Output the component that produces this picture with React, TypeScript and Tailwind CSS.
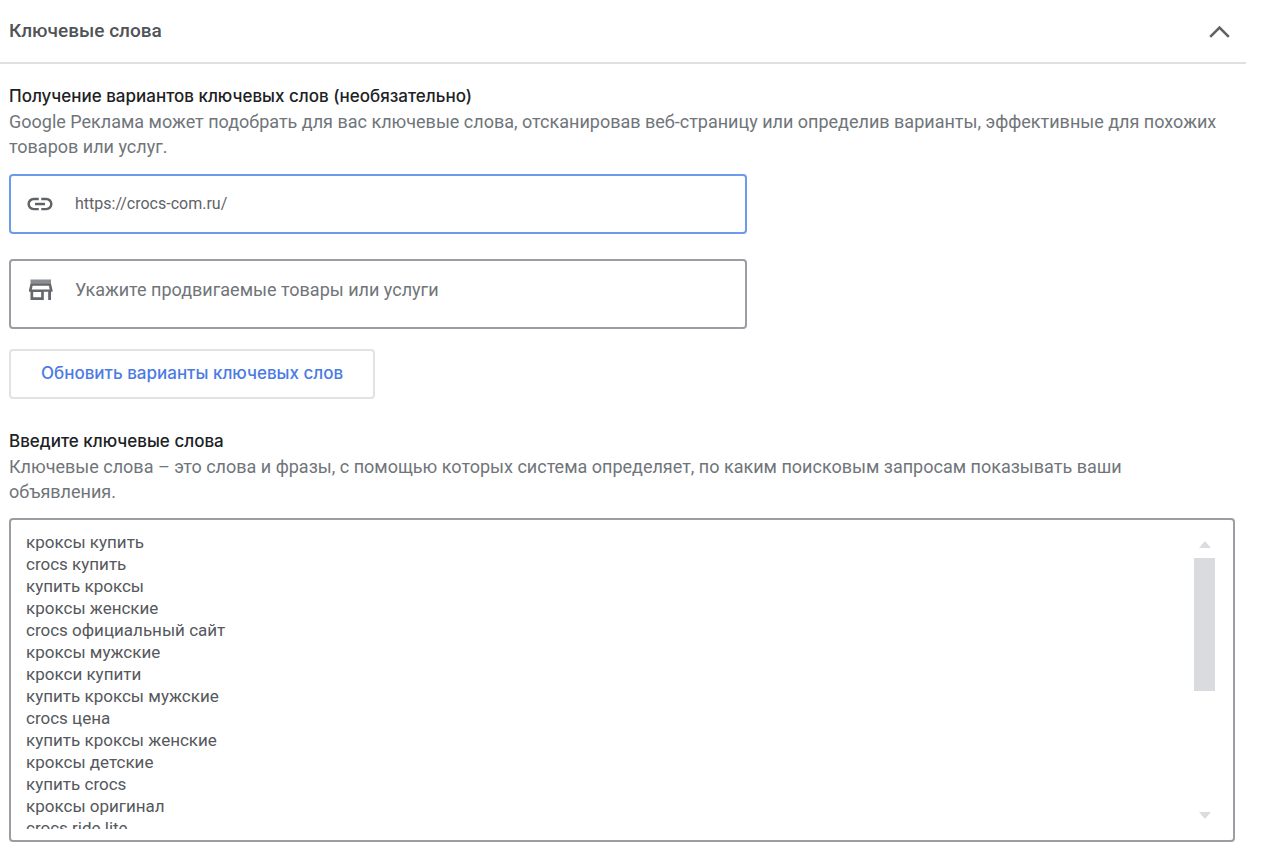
import React, { useRef, useState } from 'react';
import { MdLink } from 'react-icons/md';

const initialKeywords = [
    'кроксы купить',
    'crocs купить',
    'купить кроксы',
    'кроксы женские',
    'crocs официальный сайт',
    'кроксы мужские',
    'крокси купити',
    'купить кроксы мужские',
    'crocs цена',
    'купить кроксы женские',
    'кроксы детские',
    'купить crocs',
    'кроксы оригинал',
    'crocs ride lite',
];

const StoreIcon = () => (
    <svg width="30" height="22" viewBox="0 0 30 22" className="shrink-0">
        <path d="M5.5 0.5h20.5v5H5.5z" fill="#8b8c91" />
        <path
            fillRule="evenodd"
            fill="#64676c"
            d="M5.5 4.8H26L27.5 11v1.8H26V21h-2.8v-8.2h-4.4V21H5.5v-8.2H4V11zM7.6 6.8 6.8 10.6h17.9l-.8-3.8zM8.2 13v5.3h8V13z"
        />
    </svg>
);

const Section = ({ title, text, labelFor, children }: any) => (
    <section>
        <h3 className="font-[Inter,sans-serif] text-[17px] font-medium leading-[25px] text-[#202124]">
            <label htmlFor={labelFor}>{title}</label>
        </h3>
        <p className="pr-3 text-lg leading-[25px] text-[#70757a]">{text}</p>
        {children}
    </section>
);

const KeywordsBox = () => {
    const [keywords, setKeywords] = useState(initialKeywords.join('\n'));
    const areaRef = useRef<HTMLTextAreaElement>(null);

    const scroll = (top: number) => areaRef.current?.scrollBy({ top });

    return (
        <div className="mt-3.5 flex rounded border-2 border-[#9a9da1] py-[11px] pl-[15px] pr-[18px]">
            <textarea
                id="keywords"
                ref={areaRef}
                value={keywords}
                onChange={(e) => setKeywords(e.target.value)}
                className="h-[298px] min-w-0 flex-1 resize-none text-[17px] leading-[22px] text-[#55585c] outline-none [scrollbar-width:none]"
            />
            <div className="flex w-[21px] flex-col items-center">
                <button type="button" aria-label="Вверх" onClick={() => scroll(-22)} className="flex h-[27px] w-full items-center justify-center">
                    <svg width="12" height="7" viewBox="0 0 12 7" fill="#dadce0"><path d="M0 7 6 0l6 7z" /></svg>
                </button>
                <div className="h-[133px] w-full bg-[#dadbdf]" />
                <button type="button" aria-label="Вниз" onClick={() => scroll(22)} className="mt-auto flex h-[27px] w-full items-center justify-center">
                    <svg width="12" height="7" viewBox="0 0 12 7" fill="#dadce0"><path d="M0 0h12L6 7z" /></svg>
                </button>
            </div>
        </div>
    );
};

const App = () => {
    const [open, setOpen] = useState(true);
    const [url, setUrl] = useState('https://crocs-com.ru/');
    const [product, setProduct] = useState('');

    return (
        <div className="min-h-screen bg-white pr-5 font-[Roboto,sans-serif]">
            <header className="flex h-16 items-center justify-between border-b-2 border-[#dfe0e4] pl-[9px] pr-4">
                <h2 className="text-[19px] font-medium leading-6 text-[#505357]">Ключевые слова</h2>
                <button type="button" aria-label="Свернуть" onClick={() => setOpen(!open)} className="text-[#5f6368]">
                    <svg width="21" height="13" viewBox="0 0 21 13" fill="none" stroke="currentColor" strokeWidth="2.6">
                        <path d="M1.2 11.8 10.5 2.5l9.3 9.3" />
                    </svg>
                </button>
            </header>

            {open && (
                <main className="flex flex-col gap-[30px] pb-2.5 pl-[9px] pr-[11px] pt-5">
                    <Section
                        labelFor="url"
                        title="Получение вариантов ключевых слов (необязательно)"
                        text="Google Реклама может подобрать для вас ключевые слова, отсканировав веб-страницу или определив варианты, эффективные для похожих товаров или услуг."
                    >
                        <div className="mt-[15px] flex h-[60px] max-w-[738px] items-center gap-5 rounded border-2 border-[#6d9aea] px-3.5 text-[#5f6368]">
                            <MdLink size={30} className="shrink-0" />
                            <input
                                id="url"
                                type="url"
                                value={url}
                                onChange={(e) => setUrl(e.target.value)}
                                className="min-w-0 flex-1 text-base outline-none"
                            />
                        </div>
                        <div className="mt-[25px] flex h-[70px] max-w-[738px] items-center gap-5 rounded border-2 border-[#9a9da1] px-3.5 pb-2 text-[#5f6368]">
                            <StoreIcon />
                            <input
                                type="text"
                                aria-label="Товары или услуги"
                                placeholder="Укажите продвигаемые товары или услуги"
                                value={product}
                                onChange={(e) => setProduct(e.target.value)}
                                className="min-w-0 flex-1 text-lg outline-none placeholder:text-[#70757a]"
                            />
                        </div>
                        <button type="button" className="mt-5 h-[50px] rounded border-2 border-[#e1e2e5] px-[30px] font-[Inter,sans-serif] text-[17px] font-medium text-[#4b7be5]">
                            Обновить варианты ключевых слов
                        </button>
                    </Section>

                    <Section
                        labelFor="keywords"
                        title="Введите ключевые слова"
                        text="Ключевые слова – это слова и фразы, с помощью которых система определяет, по каким поисковым запросам показывать ваши объявления."
                    >
                        <KeywordsBox />
                    </Section>
                </main>
            )}
        </div>
    );
};

export default App;
